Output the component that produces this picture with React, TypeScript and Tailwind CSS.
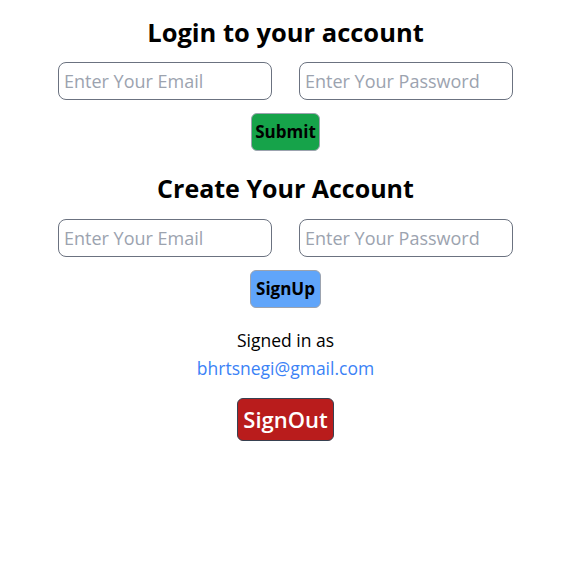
import { useState } from "react";

const font = { fontFamily: '"Open Sans", "Noto Sans", sans-serif' };

const inputClass =
	"w-[214px] h-[38px] border border-[#6b7280] rounded-lg px-[5px] text-lg placeholder:text-[#9ca3af] outline-none";

export default function App() {
	const [email, setEmail] = useState("");
	const [password, setPassword] = useState("");
	const [newEmail, setNewEmail] = useState("");
	const [newPassword, setNewPassword] = useState("");

	return (
		<div className="w-[571px] flex flex-col items-center pt-4 text-black" style={font}>
			<h1 className="text-[25.5px] leading-8 font-bold">Login to your account</h1>
			<div className="flex gap-[27px] mt-[14px]">
				<input
					type="email"
					value={email}
					onChange={(e) => setEmail(e.target.value)}
					placeholder="Enter Your Email"
					className={inputClass}
				/>
				<input
					type="password"
					value={password}
					onChange={(e) => setPassword(e.target.value)}
					placeholder="Enter Your Password"
					className={inputClass}
				/>
			</div>
			<button className="mt-[13px] h-[38px] px-[3px] bg-[#16a34a] border border-[#9ca3af] rounded-md text-[17px] font-bold">
				Submit
			</button>

			<h1 className="text-[25px] leading-8 font-bold mt-[21px]">Create Your Account</h1>
			<div className="flex gap-[27px] mt-[15px]">
				<input
					type="email"
					value={newEmail}
					onChange={(e) => setNewEmail(e.target.value)}
					placeholder="Enter Your Email"
					className={inputClass}
				/>
				<input
					type="password"
					value={newPassword}
					onChange={(e) => setNewPassword(e.target.value)}
					placeholder="Enter Your Password"
					className={inputClass}
				/>
			</div>
			<button className="mt-[13px] h-[38px] px-[5px] bg-[#60a5fa] border border-[#9ca3af] rounded-md text-[17px] font-bold">
				SignUp
			</button>

			<p className="mt-[18px] text-[17.5px] leading-7">Signed in as</p>
			<p className="text-[17.5px] leading-7 text-[#3b82f6]">bhrtsnegi@gmail.com</p>
			<button className="mt-4 h-[43px] px-[5px] bg-[#b91c1c] border border-[#374151] rounded-md text-[22px] font-semibold text-white">
				SignOut
			</button>
		</div>
	);
}
